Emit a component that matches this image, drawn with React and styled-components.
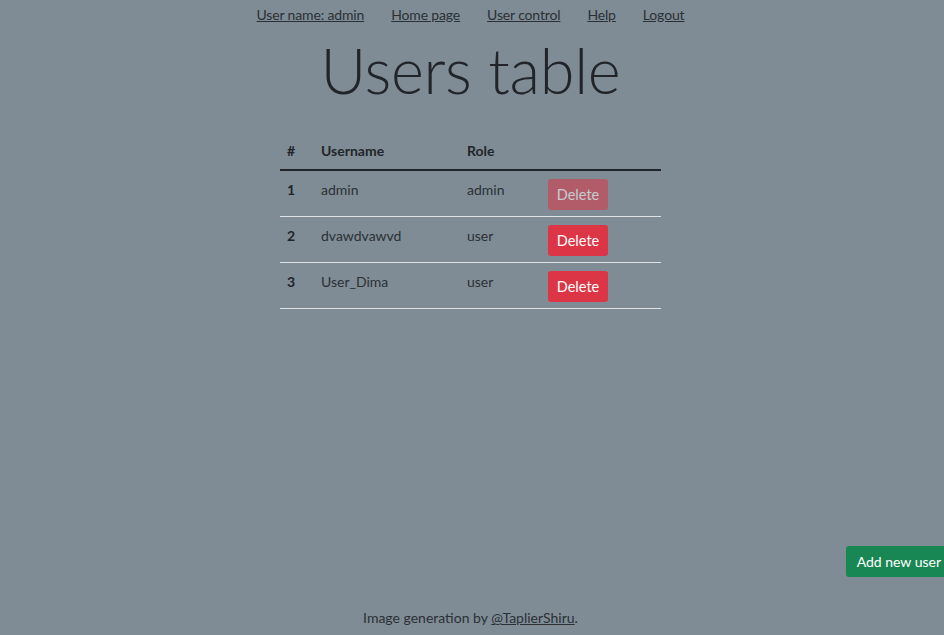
import React from "react";
import styled, { createGlobalStyle } from "styled-components";

const Global = createGlobalStyle`
  html, body { margin: 0; padding: 0; }
  body {
    background: #7f8c96;
    font-family: "Lato", "Open Sans", sans-serif;
    font-size: 14px;
    color: #212529;
  }
`;

const Page = styled.div`
  min-height: 100vh;
  display: flex;
  flex-direction: column;
  align-items: center;
  box-sizing: border-box;
  padding-right: 3px;
`;

const Nav = styled.nav`
  display: flex;
  gap: 27px;
  padding-top: 2px;
  height: 25px;
  align-items: center;
`;

const NavLink = styled.a`
  color: #2b3035;
  text-decoration: underline;
  font-size: 14px;
  letter-spacing: -0.15px;
  cursor: pointer;
`;

const Title = styled.h1`
  margin: 5px 0 24px;
  font-weight: 300;
  font-size: 63px;
  line-height: 1.2;
  letter-spacing: -0.3px;
  color: #212529;
`;

const Table = styled.table`
  width: 381px;
  border-collapse: collapse;
  table-layout: fixed;
`;

const Th = styled.th`
  box-sizing: border-box;
  text-align: left;
  font-weight: 700;
  padding: 8px 7px;
  line-height: 21px;
  border-bottom: 2px solid #212529;
  width: ${(p) => p.$w}px;
`;

const Tr = styled.tr`
  border-bottom: 1px solid #dfe3e7;
`;

const Td = styled.td`
  vertical-align: top;
  padding: 8px 7px 6px;
  line-height: 21px;
  font-weight: ${(p) => (p.$bold ? 700 : 400)};
  color: ${(p) => (p.$bold ? "#212529" : "#2b3035")};
`;

const DangerButton = styled.button`
  height: 31px;
  width: 60px;
  border: none;
  border-radius: 3px;
  background: #dc3545;
  color: #fff;
  font-family: inherit;
  font-size: 14.5px;
  padding: 0;
  opacity: ${(p) => (p.disabled ? 0.55 : 1)};
`;

const AddButton = styled.button`
  position: fixed;
  right: -8px;
  bottom: 58px;
  height: 31px;
  padding: 0 11px;
  border: none;
  border-radius: 3px;
  background: #198754;
  color: #fff;
  font-family: inherit;
  font-size: 14px;
`;

const Footer = styled.footer`
  margin-top: auto;
  padding-bottom: 7px;
  font-size: 14px;
  line-height: 21px;
  color: #2b3035;
`;

const FooterLink = styled.a`
  color: #2b3035;
  text-decoration: underline;
`;

const users = [
  { id: 1, name: "admin", role: "admin", disabled: true },
  { id: 2, name: "dvawdvawvd", role: "user" },
  { id: 3, name: "User_Dima", role: "user" },
];

export default function App() {
  return (
    <>
      <Global />
      <Page>
        <Nav>
          <NavLink>User name: admin</NavLink>
          <NavLink>Home page</NavLink>
          <NavLink>User control</NavLink>
          <NavLink>Help</NavLink>
          <NavLink>Logout</NavLink>
        </Nav>
        <Title>Users table</Title>
        <Table>
          <thead>
            <tr>
              <Th $w={34}>#</Th>
              <Th $w={146}>Username</Th>
              <Th $w={81}>Role</Th>
              <Th $w={120}></Th>
            </tr>
          </thead>
          <tbody>
            {users.map((u) => (
              <Tr key={u.id}>
                <Td $bold>{u.id}</Td>
                <Td>{u.name}</Td>
                <Td>{u.role}</Td>
                <Td>
                  <DangerButton disabled={u.disabled}>Delete</DangerButton>
                </Td>
              </Tr>
            ))}
          </tbody>
        </Table>
        <AddButton>Add new user</AddButton>
        <Footer>
          Image generation by <FooterLink>@TaplierShiru</FooterLink>.
        </Footer>
      </Page>
    </>
  );
}
